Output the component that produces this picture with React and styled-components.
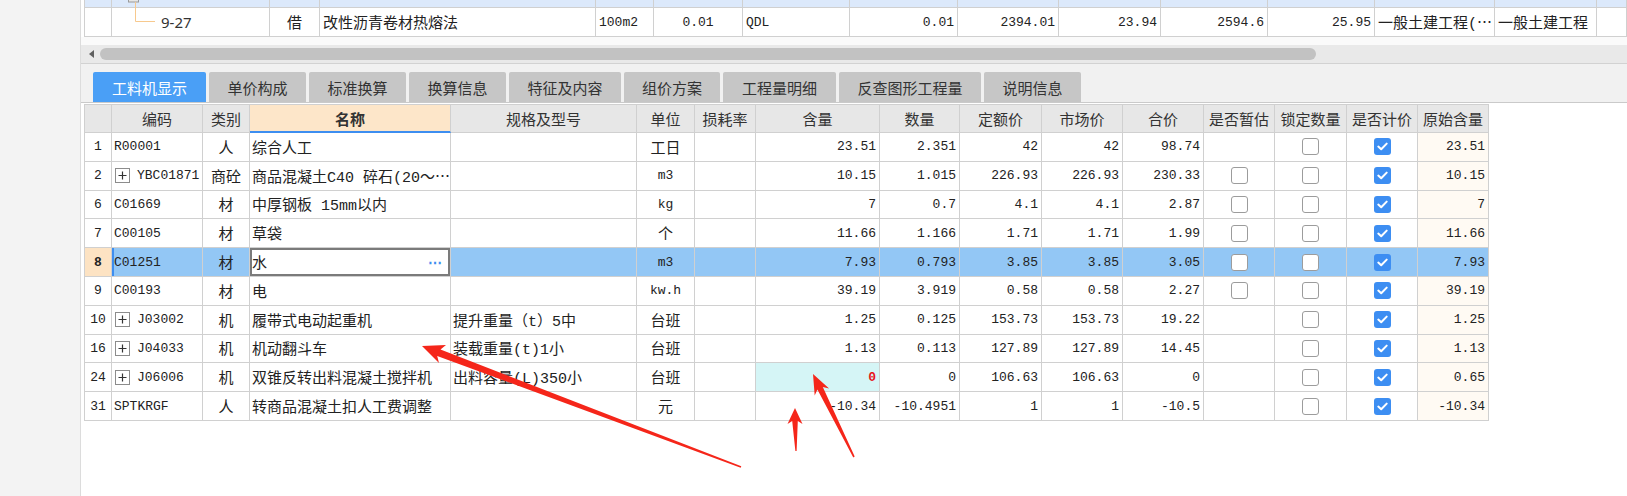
import React from 'react';
import styled, { createGlobalStyle } from 'styled-components';

const GlobalStyle = createGlobalStyle`
  html, body {
    margin: 0;
    padding: 0;
    background: #fff;
  }
  body {
    font-family: "Noto Sans CJK SC", "Noto Sans", sans-serif;
    color: #222;
  }
`;

const MIXED = `"Liberation Mono", "Noto Sans CJK SC", monospace`;

const Page = styled.div`
  position: relative;
  display: flex;
  width: 1627px;
  height: 496px;
  overflow: hidden;
`;

const LeftPane = styled.aside`
  width: 80px;
  flex: none;
  background: #f3f3f3;
  border-right: 1px solid #dcdcdc;
`;

const Main = styled.main`
  flex: 1;
  display: flex;
  flex-direction: column;
  min-width: 0;
`;

/* ---------- upper list ---------- */

const TOP_COLS = '27px 158px 50px 276px 58px 89px 107px 108px 101px 102px 107px 107px 120px 102px 1fr';

const TopTable = styled.div`
  display: grid;
  grid-template-columns: ${TOP_COLS};
  grid-template-rows: 8px 29px;
  margin-left: 3px;
  border-left: 1px solid #d0d0d0;
`;

const TopCell = styled.div`
  box-sizing: border-box;
  border-right: 1px solid #d0d0d0;
  border-bottom: 1px solid #d0d0d0;
  background: ${p => (p.$sel ? '#dce9fb' : '#fff')};
  display: flex;
  align-items: center;
  justify-content: ${p => (p.$align === 'right' ? 'flex-end' : p.$align === 'center' ? 'center' : 'flex-start')};
  padding: 0 3px;
  font-family: ${MIXED};
  font-size: ${p => (p.$mono ? '13px' : '15px')};
  white-space: nowrap;
  overflow: hidden;
  position: relative;
`;

const TreeCell = styled(TopCell)`
  padding: 0;
  overflow: visible;
`;

const TreeText = styled.span`
  font-family: "Noto Sans", sans-serif;
  font-size: 15px;
  color: #333;
`;

/* ---------- scrollbar ---------- */

const ScrollGap = styled.div`
  height: 8px;
  background: #fafafa;
`;

const ScrollTrack = styled.div`
  height: 18px;
  background: #e9e9e9;
  border-bottom: 1px solid #d2d2d2;
  display: flex;
  align-items: center;
  padding-left: 8px;
  gap: 6px;
`;

const ScrollArrow = styled.span`
  width: 0;
  height: 0;
  border-top: 4px solid transparent;
  border-bottom: 4px solid transparent;
  border-right: 5px solid #606060;
`;

const ScrollThumb = styled.div`
  width: 1216px;
  height: 12px;
  border-radius: 6px;
  background: #c2c2c2;
`;

/* ---------- tabs ---------- */

const TabStrip = styled.nav`
  height: 30px;
  padding: 8px 0 0 12px;
  background: #f1f1f1;
  border-bottom: 1px solid #cacaca;
  display: flex;
  gap: 3px;
`;

const Tab = styled.div`
  width: ${p => p.$w}px;
  height: 30px;
  box-sizing: border-box;
  border-radius: 2px 2px 0 0;
  background: ${p => (p.$active ? '#4a9ff6' : '#c6c6c6')};
  color: ${p => (p.$active ? '#fff' : '#333')};
  font-size: 15px;
  display: flex;
  align-items: center;
  justify-content: center;
`;

/* ---------- material grid ---------- */

const GRID_COLS = [27, 91, 47, 201, 186, 58, 61, 124, 80, 82, 81, 81, 71, 72, 71, 71];

const Grid = styled.div`
  display: grid;
  grid-template-columns: ${GRID_COLS.map(w => `${w}px`).join(' ')};
  grid-template-rows: 28px;
  grid-auto-rows: 28.8px;
  width: max-content;
  margin: 1px 0 0 3px;
  border-top: 1px solid #d0d0d0;
  border-left: 1px solid #d0d0d0;
`;

const HeadCell = styled.div`
  box-sizing: border-box;
  border-right: 1px solid #d0d0d0;
  border-bottom: ${p => (p.$hl ? '2px solid #3d8ef0' : '1px solid #d0d0d0')};
  background: ${p => (p.$hl ? '#fde6c9' : '#e7e7e7')};
  font-weight: ${p => (p.$hl ? 700 : 400)};
  font-size: 15px;
  color: #333;
  display: flex;
  align-items: center;
  justify-content: center;
  white-space: nowrap;
`;

const Cell = styled.div`
  box-sizing: border-box;
  border-right: 1px solid #d0d0d0;
  border-bottom: 1px solid #d0d0d0;
  background: ${p => p.$bg || '#fff'};
  display: flex;
  align-items: center;
  justify-content: ${p => (p.$align === 'right' ? 'flex-end' : p.$align === 'center' ? 'center' : 'flex-start')};
  padding: 0 3px 0 ${p => (p.$align === 'left' ? '2px' : '3px')};
  font-family: ${MIXED};
  font-size: ${p => (p.$mono ? '13px' : '15px')};
  font-weight: ${p => (p.$bold ? 700 : 400)};
  color: ${p => p.$color || '#222'};
  white-space: nowrap;
  overflow: hidden;
  box-shadow: ${p => p.$shadow || 'none'};
`;

const EditorDots = styled.span`
  margin-left: auto;
  margin-right: 5px;
  color: #3d8ef0;
  font-family: "Noto Sans", sans-serif;
  font-size: 14px;
  font-weight: 700;
`;

const PlusBox = styled.span`
  width: 15px;
  height: 15px;
  box-sizing: border-box;
  border: 1px solid #8c8c8c;
  background: #fff;
  display: inline-flex;
  align-items: center;
  justify-content: center;
  margin: 0 7px 0 1px;
  flex: none;
`;

const Check = styled.span`
  width: 17px;
  height: 17px;
  box-sizing: border-box;
  border-radius: 3px;
  border: ${p => (p.$on ? 'none' : '1px solid #9c9c9c')};
  background: ${p => (p.$on ? '#3d8ef2' : '#fff')};
  display: inline-flex;
  align-items: center;
  justify-content: center;
`;

const Overlay = styled.svg`
  position: absolute;
  left: 0;
  top: 0;
  pointer-events: none;
`;

const topRow = [
  { v: '', align: 'left' },
  { tree: true },
  { v: '借', align: 'center' },
  { v: '改性沥青卷材热熔法' },
  { v: '100m2', mono: true },
  { v: '0.01', align: 'center', mono: true },
  { v: 'QDL', mono: true },
  { v: '0.01', align: 'right', mono: true },
  { v: '2394.01', align: 'right', mono: true },
  { v: '23.94', align: 'right', mono: true },
  { v: '2594.6', align: 'right', mono: true },
  { v: '25.95', align: 'right', mono: true },
  { v: '一般土建工程(⋯' },
  { v: '一般土建工程' },
  { v: '' },
];

const tabs = [
  ['工料机显示', 113],
  ['单价构成', 97],
  ['标准换算', 97],
  ['换算信息', 97],
  ['特征及内容', 112],
  ['组价方案', 96],
  ['工程量明细', 113],
  ['反查图形工程量', 142],
  ['说明信息', 97],
];

const headers = ['', '编码', '类别', '名称', '规格及型号', '单位', '损耗率', '含量', '数量', '定额价', '市场价', '合价', '是否暂估', '锁定数量', '是否计价', '原始含量'];

const rows = [
  { n: '1', code: 'R00001', type: '人', name: '综合人工', spec: '', unit: '工日', qty: '23.51', num: '2.351', quota: '42', market: '42', total: '98.74', est: null, orig: '23.51' },
  { n: '2', plus: true, code: 'YBC01871', type: '商砼', name: '商品混凝土C40 碎石(20～⋯', spec: '', unit: 'm3', qty: '10.15', num: '1.015', quota: '226.93', market: '226.93', total: '230.33', est: false, orig: '10.15' },
  { n: '6', code: 'C01669', type: '材', name: '中厚钢板 15mm以内', spec: '', unit: 'kg', qty: '7', num: '0.7', quota: '4.1', market: '4.1', total: '2.87', est: false, orig: '7' },
  { n: '7', code: 'C00105', type: '材', name: '草袋', spec: '', unit: '个', qty: '11.66', num: '1.166', quota: '1.71', market: '1.71', total: '1.99', est: false, orig: '11.66' },
  { n: '8', code: 'C01251', type: '材', name: '水', spec: '', unit: 'm3', qty: '7.93', num: '0.793', quota: '3.85', market: '3.85', total: '3.05', est: false, orig: '7.93', sel: true },
  { n: '9', code: 'C00193', type: '材', name: '电', spec: '', unit: 'kw.h', qty: '39.19', num: '3.919', quota: '0.58', market: '0.58', total: '2.27', est: false, orig: '39.19' },
  { n: '10', plus: true, code: 'J03002', type: '机', name: '履带式电动起重机', spec: '提升重量（t）5中', unit: '台班', qty: '1.25', num: '0.125', quota: '153.73', market: '153.73', total: '19.22', est: null, orig: '1.25' },
  { n: '16', plus: true, code: 'J04033', type: '机', name: '机动翻斗车', spec: '装载重量(t)1小', unit: '台班', qty: '1.13', num: '0.113', quota: '127.89', market: '127.89', total: '14.45', est: null, orig: '1.13' },
  { n: '24', plus: true, code: 'J06006', type: '机', name: '双锥反转出料混凝土搅拌机', spec: '出料容量(L)350小', unit: '台班', qty: '0', zero: true, num: '0', quota: '106.63', market: '106.63', total: '0', est: null, orig: '0.65' },
  { n: '31', code: 'SPTKRGF', type: '人', name: '转商品混凝土扣人工费调整', spec: '', unit: '元', qty: '-10.34', num: '-10.4951', quota: '1', market: '1', total: '-10.5', est: null, orig: '-10.34' },
];

const isAscii = s => /^[\x00-\x7f]*$/.test(s);

const CheckIcon = () => (
  <svg width="11" height="9" viewBox="0 0 11 9">
    <polyline points="1.3,4.6 4.2,7.3 9.7,1.6" fill="none" stroke="#fff" strokeWidth="2" strokeLinecap="round" strokeLinejoin="round" />
  </svg>
);

const CheckBox = ({ on }) => <Check $on={on}>{on && <CheckIcon />}</Check>;

const PlusIcon = () => (
  <PlusBox>
    <svg width="9" height="9" viewBox="0 0 9 9">
      <path d="M4.5 0.5V8.5M0.5 4.5H8.5" stroke="#333" strokeWidth="1.2" />
    </svg>
  </PlusBox>
);

const GridRow = ({ r }) => {
  const bg = r.sel ? '#93c7f5' : undefined;
  return (
    <>
      <Cell $align="center" $mono $bg={r.sel ? '#fde3c3' : undefined} $bold={r.sel}>{r.n}</Cell>
      <Cell $align="left" $mono $bg={bg} $shadow={r.sel ? 'inset 2px 0 0 #3d8ef0' : undefined}>
        {r.plus && <PlusIcon />}
        {r.code}
      </Cell>
      <Cell $align="center" $bg={bg}>{r.type}</Cell>
      {r.sel ? (
        <Cell $align="left" $bg="#fff" $shadow="inset 0 0 0 2px #7b7b7b">
          {r.name}
          <EditorDots>⋯</EditorDots>
        </Cell>
      ) : (
        <Cell $align="left" $bg={bg}>{r.name}</Cell>
      )}
      <Cell $align="left" $bg={bg}>{r.spec}</Cell>
      <Cell $align="center" $mono={isAscii(r.unit)} $bg={bg}>{r.unit}</Cell>
      <Cell $bg={bg} />
      <Cell
        $align="right"
        $mono
        $bg={r.zero ? '#d5f5f6' : bg}
        $color={r.zero ? '#e8141b' : undefined}
        $bold={r.zero}
      >
        {r.qty}
      </Cell>
      <Cell $align="right" $mono $bg={bg}>{r.num}</Cell>
      <Cell $align="right" $mono $bg={bg}>{r.quota}</Cell>
      <Cell $align="right" $mono $bg={bg}>{r.market}</Cell>
      <Cell $align="right" $mono $bg={bg}>{r.total}</Cell>
      <Cell $align="center" $bg={bg}>{r.est !== null && <CheckBox on={false} />}</Cell>
      <Cell $align="center" $bg={bg}><CheckBox on={false} /></Cell>
      <Cell $align="center" $bg={bg}><CheckBox on /></Cell>
      <Cell $align="right" $mono $bg={r.sel ? bg : '#fffaf3'}>{r.orig}</Cell>
    </>
  );
};

const Arrows = () => (
  <Overlay width="1627" height="496" viewBox="0 0 1627 496">
    <g fill="#f5261a">
      <polygon points="422,346 446,345 440.5,349.5 741.3,466.3 740.7,467.7 437.2,356 439,363" />
      <polygon points="795,408 802.5,424 797.8,421 796.6,451 795.4,451 792.2,421 787.5,424" />
      <polygon points="813,374 829.1,388.4 822.8,387 854.7,456.6 853.3,457.4 817.4,389.6 814.7,395.5" />
    </g>
  </Overlay>
);

const App = () => (
  <>
    <GlobalStyle />
    <Page>
      <LeftPane />
      <Main>
        <TopTable>
          {topRow.map((c, i) =>
            c.tree ? (
              <TreeCell key={`p${i}`} $sel>
                <svg width="46" height="8" viewBox="0 0 46 8">
                  <rect x="16.5" y="-8" width="10" height="10" fill="#e6e6e6" stroke="#9a9a9a" />
                  <line x1="23.5" y1="2" x2="23.5" y2="8" stroke="#f7c98e" />
                </svg>
              </TreeCell>
            ) : (
              <TopCell key={`p${i}`} $sel />
            )
          )}
          {topRow.map((c, i) =>
            c.tree ? (
              <TreeCell key={`r${i}`}>
                <svg width="49" height="28" viewBox="0 0 49 28">
                  <path d="M23.5 0V13.5H43" fill="none" stroke="#f7c98e" />
                </svg>
                <TreeText>9-27</TreeText>
              </TreeCell>
            ) : (
              <TopCell key={`r${i}`} $align={c.align} $mono={c.mono}>{c.v}</TopCell>
            )
          )}
        </TopTable>
        <ScrollGap />
        <ScrollTrack>
          <ScrollArrow />
          <ScrollThumb />
        </ScrollTrack>
        <TabStrip>
          {tabs.map(([label, w], i) => (
            <Tab key={label} $w={w} $active={i === 0}>{label}</Tab>
          ))}
        </TabStrip>
        <Grid>
          {headers.map((h, i) => (
            <HeadCell key={i} $hl={h === '名称'}>{h}</HeadCell>
          ))}
          {rows.map(r => (
            <GridRow key={r.n} r={r} />
          ))}
        </Grid>
      </Main>
      <Arrows />
    </Page>
  </>
);

export default App;
